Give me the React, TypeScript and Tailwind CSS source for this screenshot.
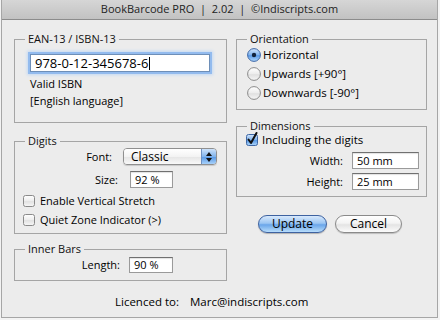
import React from 'react'

function Legend({ children }: { children: React.ReactNode }) {
  return <legend className="ml-[10px] px-[3px] text-[11px] leading-[12px] text-[#111]">{children}</legend>
}

function Radio({ checked }: { checked?: boolean }) {
  return (
    <svg width="14" height="14" viewBox="0 0 14 14" className="shrink-0">
      <defs>
        <linearGradient id="radioOn" x1="0" y1="0" x2="0" y2="1">
          <stop offset="0" stopColor="#d4e6fb" />
          <stop offset="0.5" stopColor="#7fb2ec" />
          <stop offset="0.55" stopColor="#5a9ae6" />
          <stop offset="1" stopColor="#b2d8fb" />
        </linearGradient>
        <linearGradient id="radioOff" x1="0" y1="0" x2="0" y2="1">
          <stop offset="0" stopColor="#ffffff" />
          <stop offset="0.5" stopColor="#ececec" />
          <stop offset="0.55" stopColor="#e0e0e0" />
          <stop offset="1" stopColor="#f7f7f7" />
        </linearGradient>
      </defs>
      <circle cx="7" cy="7" r="6.4" fill={checked ? 'url(#radioOn)' : 'url(#radioOff)'} stroke={checked ? '#3f68a6' : '#8a8a8a'} strokeWidth="1" />
      {checked && <circle cx="7" cy="7" r="2.2" fill="#13233b" />}
    </svg>
  )
}

function Checkbox({ checked }: { checked?: boolean }) {
  return (
    <svg width="12" height="12" viewBox="0 0 12 12" className="shrink-0 overflow-visible">
      <defs>
        <linearGradient id="cbOn" x1="0" y1="0" x2="0" y2="1">
          <stop offset="0" stopColor="#d4e6fb" />
          <stop offset="0.5" stopColor="#7fb2ec" />
          <stop offset="0.55" stopColor="#5a9ae6" />
          <stop offset="1" stopColor="#b2d8fb" />
        </linearGradient>
        <linearGradient id="cbOff" x1="0" y1="0" x2="0" y2="1">
          <stop offset="0" stopColor="#ffffff" />
          <stop offset="0.5" stopColor="#ededed" />
          <stop offset="0.55" stopColor="#e2e2e2" />
          <stop offset="1" stopColor="#f7f7f7" />
        </linearGradient>
      </defs>
      <rect x="0.5" y="0.5" width="11" height="11" rx="2" fill={checked ? 'url(#cbOn)' : 'url(#cbOff)'} stroke={checked ? '#3f68a6' : '#8a8a8a'} />
      {checked && <path d="M2.5 5.5 L5 9 L10.5 -1" fill="none" stroke="#111" strokeWidth="2" strokeLinecap="round" strokeLinejoin="round" />}
    </svg>
  )
}

function Field({ value, className }: { value: string; className: string }) {
  return (
    <div className={`flex items-center bg-white border border-[#9a9a9a] border-t-[#707070] shadow-[inset_0_1px_1px_rgba(0,0,0,0.12)] pl-[4px] text-[11px] text-black ${className}`}>
      {value}
    </div>
  )
}

export default function App() {
  return (
    <div className="w-[440px] h-[320px] bg-[#f3f3f3] font-['Open_Sans','DejaVu_Sans',sans-serif] text-black">
      <div className="ml-px w-[437px] h-[318px] bg-[#ececec] border-x border-b border-[#a6a6a6]">
        {/* title bar */}
        <div className="h-[20px] flex items-center justify-center border-b border-[#8c8c8c] bg-[linear-gradient(to_bottom,#d6d6d6,#c2c2c2)] text-[11px] text-[#222] whitespace-pre">
          BookBarcode PRO  |  2.02  |  ©Indiscripts.com
        </div>

        <div className="grid grid-cols-[213px_191px] gap-x-[9px] pl-[12px] pt-[13px] text-[11px] leading-[14px]">
          {/* left column */}
          <div className="flex flex-col">
            <fieldset className="border border-[#a5a5a5] min-w-0 pb-[13px]">
              <Legend>EAN-13 / ISBN-13</Legend>
              <div className="ml-[15px] mt-[9px] w-[180px] h-[18px] flex items-center bg-white border border-[#6e8fb8] shadow-[0_0_0_2px_#93bbee,0_0_3px_3px_#c3d9f4] pl-[4px] text-[13px]">
                978-0-12-345678-6
                <span className="ml-px w-px h-[13px] bg-black" />
              </div>
              <div className="ml-[15px] mt-[3px] leading-[17px]">
                <div>Valid ISBN</div>
                <div>[English language]</div>
              </div>
            </fieldset>

            <fieldset className="mt-[12px] border border-[#a5a5a5] min-w-0 pb-[4px]">
              <Legend>Digits</Legend>
              <div className="mt-[1px] flex items-center h-[17px]">
                <span className="w-[97px] text-right">Font:</span>
                <div className="ml-[11px] w-[94px] h-[17px] flex rounded-[4px] border border-[#8f8f8f] overflow-hidden shadow-[0_1px_1px_rgba(0,0,0,0.15)]">
                  <div className="flex-1 flex items-center pl-[7px] text-[12px] bg-[linear-gradient(to_bottom,#ffffff_0%,#f3f3f3_50%,#e6e6e6_55%,#f8f8f8_100%)]">Classic</div>
                  <div className="w-[15px] border-l border-[#6d8fc0] flex flex-col items-center justify-center gap-[2px] bg-[linear-gradient(to_bottom,#cde2fa_0%,#82b4ec_50%,#5b9be6_55%,#a8d1fa_100%)]">
                    <svg width="6" height="4" viewBox="0 0 6 4"><path d="M0 4 L3 0 L6 4 Z" fill="#111" /></svg>
                    <svg width="6" height="4" viewBox="0 0 6 4"><path d="M0 0 L3 4 L6 0 Z" fill="#111" /></svg>
                  </div>
                </div>
              </div>
              <div className="mt-[6px] flex items-center h-[17px]">
                <span className="w-[103px] text-right">Size:</span>
                <Field value="92 %" className="ml-[12px] w-[43px] h-[17px]" />
              </div>
              <div className="mt-[3px] h-[19px] flex items-center gap-[5px] pl-[8px]">
                <Checkbox />
                <span>Enable Vertical Stretch</span>
              </div>
              <div className="h-[19px] flex items-center gap-[5px] pl-[8px]">
                <Checkbox />
                <span>Quiet Zone Indicator (&gt;)</span>
              </div>
            </fieldset>

            <fieldset className="mt-[9px] border border-[#a5a5a5] min-w-0 pb-[7px]">
              <Legend>Inner Bars</Legend>
              <div className="mt-[2px] flex items-center h-[16px]">
                <span className="w-[105px] text-right">Length:</span>
                <Field value="90 %" className="ml-[9px] w-[44px] h-[16px]" />
              </div>
            </fieldset>
          </div>

          {/* right column */}
          <div className="flex flex-col">
            <fieldset className="border border-[#a5a5a5] min-w-0 pb-[7px]">
              <Legend>Orientation</Legend>
              {[
                ['Horizontal', true],
                ['Upwards [+90°]', false],
                ['Downwards [-90°]', false],
              ].map(([label, on]) => (
                <div key={label as string} className="h-[19px] flex items-center gap-[2px] pl-[10px] text-[11.5px]">
                  <Radio checked={on as boolean} />
                  <span>{label}</span>
                </div>
              ))}
            </fieldset>

            <fieldset className="mt-[10px] border border-[#a5a5a5] min-w-0 pb-[6px]">
              <Legend>Dimensions</Legend>
              <div className="h-[16px] flex items-center gap-[4px] pl-[9px] text-[11.5px]">
                <Checkbox checked />
                <span>Including the digits</span>
              </div>
              <div className="mt-[4px] flex items-center h-[17px]">
                <span className="w-[106px] text-right">Width:</span>
                <Field value="50 mm" className="ml-[9px] w-[67px] h-[17px]" />
              </div>
              <div className="mt-[4px] flex items-center h-[17px]">
                <span className="w-[106px] text-right">Height:</span>
                <Field value="25 mm" className="ml-[9px] w-[67px] h-[17px]" />
              </div>
            </fieldset>

            <div className="mt-[18px] flex gap-[8px] pl-[22px]">
              <button className="w-[69px] h-[18px] rounded-full border border-[#3e62a0] text-[12px] leading-[16px] text-black shadow-[0_1px_1px_rgba(0,0,0,0.25)] bg-[linear-gradient(to_bottom,#d8e9fc_0%,#9cc6f3_45%,#6aa6ea_55%,#b8ddfb_100%)]">
                Update
              </button>
              <button className="w-[67px] h-[18px] rounded-full border border-[#8a8a8a] text-[12px] leading-[16px] text-black shadow-[0_1px_1px_rgba(0,0,0,0.2)] bg-[linear-gradient(to_bottom,#ffffff_0%,#f3f3f3_45%,#e4e4e4_55%,#fbfbfb_100%)]">
                Cancel
              </button>
            </div>
          </div>
        </div>

        <div className="mt-[14px] ml-[113px] flex gap-[11px] text-[11.5px] leading-[14px]">
          <span>Licenced to:</span>
          <span>Marc@indiscripts.com</span>
        </div>
      </div>
    </div>
  )
}
